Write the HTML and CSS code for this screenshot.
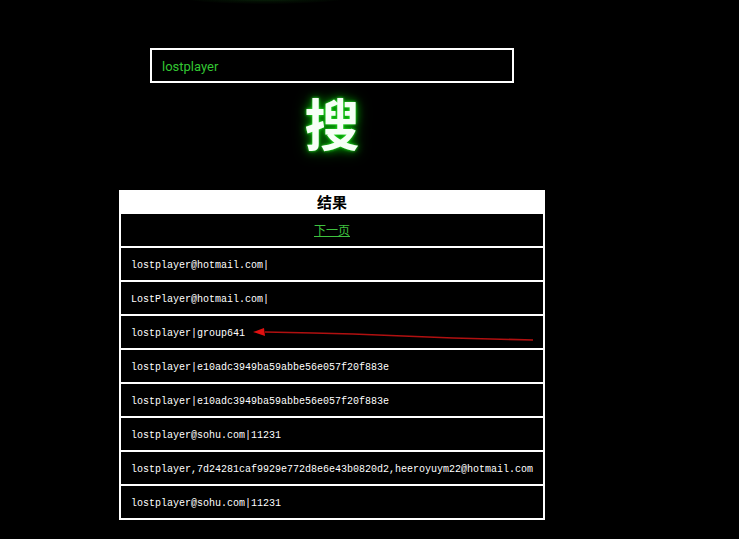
FILE: index.html
```html
<!DOCTYPE html>
<html>
<head>
<meta charset="utf-8">
<link rel="stylesheet" href="styles.css">
</head>
<body>
<div class="glow-top"></div>
<div class="wrap">
  <div class="search-box">lostplayer</div>
  <div class="sou">搜</div>
  <div class="results">
    <div class="head">结果</div>
    <div class="row center"><a href="#" class="next">下一页</a></div>
    <div class="row">lostplayer@hotmail.com|</div>
    <div class="row">LostPlayer@hotmail.com|</div>
    <div class="row marked">lostplayer|group641
      <svg class="arrow" width="290" height="16" viewBox="0 0 290 16">
        <polyline points="12,4 60,5 100,6 150,8 200,10 280,12" fill="none" stroke="#b01010" stroke-width="1.5"/>
        <polygon points="0,4 11,0 12,8" fill="#e01010"/>
      </svg>
    </div>
    <div class="row">lostplayer|e10adc3949ba59abbe56e057f20f883e</div>
    <div class="row">lostplayer|e10adc3949ba59abbe56e057f20f883e</div>
    <div class="row">lostplayer@sohu.com|11231</div>
    <div class="row">lostplayer,7d24281caf9929e772d8e6e43b0820d2,heeroyuym22@hotmail.com</div>
    <div class="row">lostplayer@sohu.com|11231</div>
  </div>
</div>
</body>
</html>
```
FILE: styles.css
```css
html, body {
  margin: 0;
  padding: 0;
  background: #000;
  height: 539px;
  overflow: hidden;
}
body {
  position: relative;
  font-family: "Liberation Sans", Arial, sans-serif;
}
.glow-top {
  position: absolute;
  left: 180px;
  top: -10px;
  width: 170px;
  height: 14px;
  border-radius: 50%;
  background: radial-gradient(ellipse at center, rgba(30,110,30,0.55) 0%, rgba(10,50,10,0.3) 45%, rgba(0,0,0,0) 75%);
}
.wrap {
  width: 664px;
  display: flex;
  flex-direction: column;
  align-items: center;
  padding-top: 48px;
}
.search-box {
  box-sizing: border-box;
  width: 364px;
  height: 35px;
  border: 2px solid #fff;
  color: #33c633;
  font-family: Roboto, "Liberation Sans", sans-serif;
  font-size: 13px;
  line-height: 33px;
  padding-left: 10px;
}
.sou {
  margin-top: 2px;
  height: 72px;
  line-height: 72px;
  font-family: "Noto Sans CJK SC", sans-serif;
  font-weight: 700;
  font-size: 55px;
  color: #f6fff6;
  text-shadow: 0 0 3px #3f3, 0 0 8px #0a0, 0 0 16px #060;
}
.results {
  margin-top: 33px;
  box-sizing: border-box;
  width: 426px;
  background: #fff;
  padding: 0 2px 2px;
  display: flex;
  flex-direction: column;
  gap: 2px;
}
.head {
  height: 22px;
  line-height: 24px;
  text-align: center;
  font-family: "Noto Sans CJK SC", sans-serif;
  font-weight: 700;
  font-size: 15px;
  color: #000;
}
.row {
  position: relative;
  height: 32px;
  line-height: 36px;
  background: #000;
  color: #fff;
  font-family: "Liberation Mono", "DejaVu Sans Mono", monospace;
  font-size: 10px;
  padding-left: 10px;
  white-space: nowrap;
}
.row.center {
  text-align: center;
  padding-left: 0;
  line-height: 32px;
}
.next {
  color: #3fc23f;
  font-family: "Noto Sans CJK SC", sans-serif;
  font-size: 12px;
  text-decoration: underline;
}
.arrow {
  position: absolute;
  left: 132px;
  top: 12px;
}
```
